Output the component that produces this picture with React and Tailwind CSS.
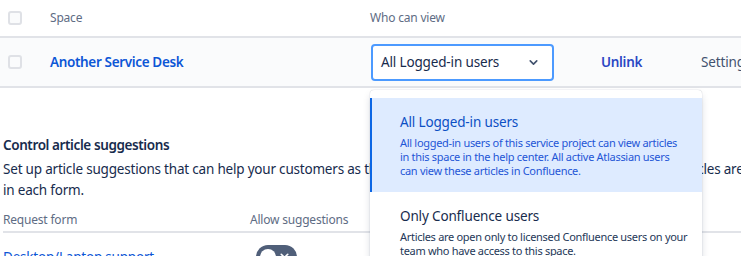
import { ChevronDown, X } from 'lucide-react';

function Checkbox() {
  return <span className="block h-[14px] w-[14px] rounded-[3px] border-2 border-[#dfe1e6] bg-[#fafbfc]" />;
}

function MenuOption({ title, lines, selected }) {
  return (
    <div
      className={
        selected
          ? 'border-l-2 border-[#0c66e4] bg-[#deebff] py-[14px] pl-[28px] pr-[14px]'
          : 'border-l-2 border-transparent py-[14px] pl-[28px] pr-[14px]'
      }
    >
      <div className={selected ? 'text-[13.5px] leading-[20px] tracking-[-0.15px] text-[#0c4fc4]' : 'text-[13.5px] leading-[20px] tracking-[-0.15px] text-[#172b4d]'}>{title}</div>
      <p className={selected ? 'mt-1 whitespace-nowrap text-[11px] leading-[14px] tracking-[-0.3px] text-[#1f56d6]' : 'mt-1 whitespace-nowrap text-[11px] leading-[14px] tracking-[-0.3px] text-[#253858]'}>
        {lines.map((l, i) => (
          <span key={i} className="block">{l}</span>
        ))}
      </p>
    </div>
  );
}

export default function App() {
  return (
    <div className="relative h-[256px] w-[741px] overflow-hidden bg-white font-['Noto_Sans',sans-serif] text-[#172b4d]">
      {/* Spaces table */}
      <div className="flex h-[38px] items-center border-b-2 border-[#e1e3e8] text-[12px] tracking-[-0.2px] text-[#5e6c84]">
        <div className="w-[50px] shrink-0 pl-2"><Checkbox /></div>
        <div className="w-[320px] shrink-0">Space</div>
        <div>Who can view</div>
      </div>
      <div className="flex h-[50px] items-center border-b-2 border-[#e1e3e8] bg-[#fafbfc] text-[13.5px] tracking-[-0.15px]">
        <div className="w-[50px] shrink-0 pl-2"><Checkbox /></div>
        <div className="w-[321px] shrink-0 font-semibold tracking-[-0.35px] text-[#0c56d6]">Another Service Desk</div>
        <div className="flex h-[37px] w-[183px] shrink-0 items-center justify-between rounded-[4px] border-2 border-[#4c9aff] bg-white pl-[8px] pr-[12px]">
          <span>All Logged-in users</span>
          <ChevronDown size={13} strokeWidth={3} className="text-[#42526e]" />
        </div>
        <div className="w-[147px] shrink-0 pl-[47px] font-semibold tracking-[-0.3px] text-[#2b47c4]">Unlink</div>
        <div className="shrink-0 whitespace-nowrap text-[#42526e]">Settings</div>
      </div>

      {/* Article suggestions */}
      <section className="mt-[47px] pl-[3px]">
        <h2 className="text-[13.5px] font-semibold leading-[20px] tracking-[-0.4px]">Control article suggestions</h2>
        <p className="mt-[4px] whitespace-nowrap text-[13.5px] leading-[21px] tracking-[-0.2px] text-[#172b4d]">
          <span className="block">Set up article suggestions that can help your customers as they raise requests, and choose which forms show articles are shown</span>
          <span className="block">in each form.</span>
        </p>
        <div className="mt-[8px] flex h-[24px] items-center border-b-2 border-[#e1e3e8] text-[12px] tracking-[-0.2px] text-[#5e6c84]">
          <div className="w-[247px] shrink-0">Request form</div>
          <div>Allow suggestions</div>
        </div>
        <div className="mt-[12px] flex h-[24px] items-center text-[13.5px] tracking-[-0.2px]">
          <div className="w-[253px] shrink-0 text-[#0c56d6]">Desktop/Laptop support</div>
          <div className="flex h-[24px] w-[41px] shrink-0 items-center justify-between rounded-full bg-[#505f79] px-[4px]">
            <span className="h-[16px] w-[16px] rounded-full bg-white" />
            <X size={13} strokeWidth={3} className="mr-[2px] text-white" />
          </div>
        </div>
      </section>

      {/* Open select menu */}
      <div className="absolute left-[370px] top-[90px] w-[332px] rounded-[4px] bg-white py-[8px] shadow-[0_0_1px_rgba(9,30,66,0.31),0_4px_8px_-2px_rgba(9,30,66,0.25)]">
        <MenuOption
          selected
          title="All Logged-in users"
          lines={[
            'All logged-in users of this service project can view articles',
            'in this space in the help center. All active Atlassian users',
            'can view these articles in Confluence.',
          ]}
        />
        <MenuOption
          title="Only Confluence users"
          lines={['Articles are open only to licensed Confluence users on your', 'team who have access to this space.']}
        />
      </div>
    </div>
  );
}
